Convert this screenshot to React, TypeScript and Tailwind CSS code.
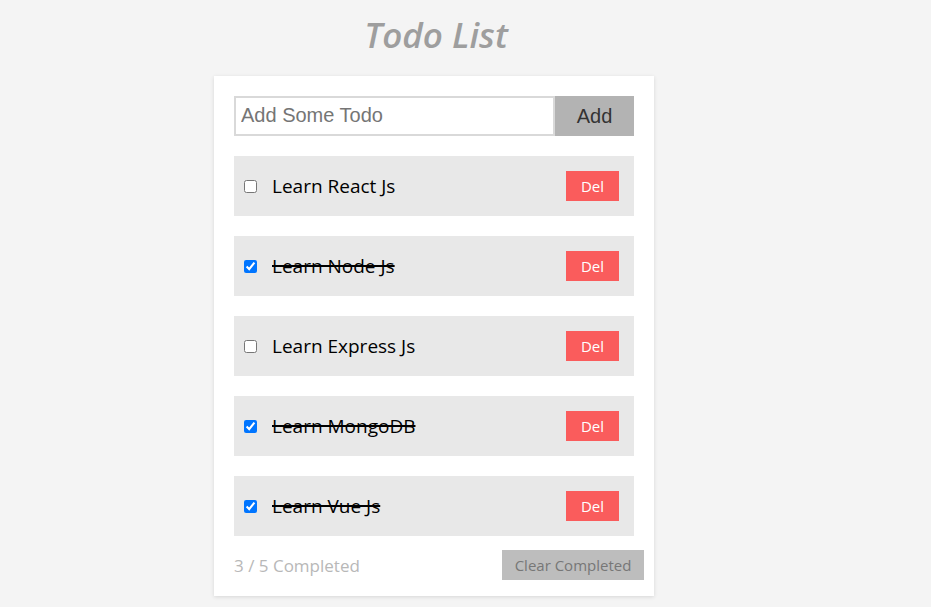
import React from "react";

const todos = [
  { text: "Learn React Js", done: false },
  { text: "Learn Node Js", done: true },
  { text: "Learn Express Js", done: false },
  { text: "Learn MongoDB", done: true },
  { text: "Learn Vue Js", done: true },
];

export default function App() {
  return (
    <div className="min-h-[607px] w-full bg-[#f4f4f4] [font-family:'Open_Sans','Noto_Sans',sans-serif]">
      <div className="ml-[214px] w-[440px] pt-[13px]">
        <h1 className="h-[44px] text-center text-[35px] font-semibold italic leading-[44px] text-[#9e9e9e] pl-[4px]">
          Todo List
        </h1>
        <div className="mt-[19px] bg-white p-[20px] pb-[16px] shadow-[0_1px_4px_rgba(0,0,0,0.12)]">
          <div className="flex h-[40px]">
            <input
              className="h-[40px] w-[321px] border-2 border-[#d9d9d9] px-[5px] pb-[2px] text-[20px] outline-none [font-family:'Liberation_Sans',Arial,sans-serif] placeholder:text-[#757575]"
              placeholder="Add Some Todo"
            />
            <button className="h-[40px] w-[79px] bg-[#b3b3b3] text-[20px] text-[#333] [font-family:'Liberation_Sans',Arial,sans-serif]">
              Add
            </button>
          </div>
          <div className="mt-[20px] flex flex-col gap-[20px]">
            {todos.map((t) => (
              <div key={t.text} className="flex h-[60px] items-center bg-[#e8e8e8] pl-[10px] pr-[15px]">
                <input
                  type="checkbox"
                  defaultChecked={t.done}
                  className="m-0 h-[13px] w-[13px] accent-[#0075ff]"
                />
                <span
                  className={
                    "ml-[15px] pt-[1px] text-[19px] text-black " +
                    (t.done ? "line-through decoration-[2px]" : "")
                  }
                >
                  {t.text}
                </span>
                <button className="ml-auto h-[30px] w-[53px] bg-[#fa5c5c] text-[15px] text-white">
                  Del
                </button>
              </div>
            ))}
          </div>
          <div className="mt-[14px] flex h-[30px] items-center">
            <span className="pt-[2px] text-[17px] text-[#b8b8b8]">3 / 5 Completed</span>
            <button className="ml-auto mr-[-10px] h-[30px] w-[142px] bg-[#bdbdbd] text-[15px] text-[#777]">
              Clear Completed
            </button>
          </div>
        </div>
      </div>
    </div>
  );
}
